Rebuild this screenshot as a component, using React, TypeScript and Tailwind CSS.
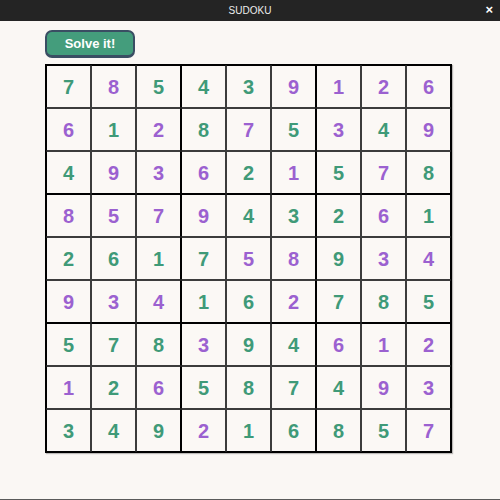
import React from 'react'

type Cell = { v: number; g: boolean }

// g = green (given), p = purple (solved)
const rows: string[] = [
  '7g 8p 5g 4g 3g 9p 1p 2p 6p',
  '6p 1g 2p 8g 7p 5g 3p 4g 9p',
  '4g 9p 3p 6p 2g 1p 5g 7p 8g',
  '8p 5p 7p 9p 4g 3g 2g 6p 1g',
  '2g 6g 1g 7g 5p 8p 9g 3p 4p',
  '9p 3p 4p 1g 6g 2p 7g 8g 5g',
  '5g 7g 8g 3p 9g 4g 6p 1p 2p',
  '1p 2g 6p 5g 8g 7g 4g 9p 3p',
  '3g 4g 9g 2p 1g 6g 8g 5g 7p',
]

const board: Cell[][] = rows.map(r =>
  r.split(' ').map(s => ({ v: Number(s[0]), g: s[1] === 'g' })),
)

const SudokuCell = function ({ cell, r, c }: { cell: Cell; r: number; c: number }) {
  return (
    <div
      className={[
        'flex h-[43px] w-[45px] items-center justify-center border border-[#3c3c3c] text-[20px] font-bold',
        c % 3 === 2 ? 'border-r-black' : '',
        c % 3 === 0 ? 'border-l-black' : '',
        r % 3 === 2 ? 'border-b-black' : '',
        r % 3 === 0 ? 'border-t-black' : '',
        cell.g ? 'text-[#3f9a78]' : 'text-[#9b61d0]',
      ].join(' ')}
    >
      {cell.v}
    </div>
  )
}

export default function App() {
  return (
    <div
      className="flex h-[500px] w-[500px] flex-col border-b border-[#5a5a5a] bg-[#faf7f4]"
      style={{ fontFamily: '"Liberation Sans", Arial, sans-serif' }}
    >
      <div className="relative flex h-[21px] items-center justify-center bg-[#242424]">
        <span className="text-[10px] text-[#ececec]">SUDOKU</span>
        <span className="absolute right-[7px] top-[3px] text-[13px] font-bold leading-none text-white">
          ×
        </span>
      </div>
      <div className="flex flex-col items-start pl-[45px] pt-[9px]">
        <button className="flex h-[28px] w-[90px] items-center justify-center rounded-[7px] border-2 border-b-[3px] border-[#3a4e63] bg-[#449d7c] text-[13px] font-bold text-white">
          Solve it!
        </button>
        <div className="mt-[6px] grid grid-cols-[repeat(9,45px)] border border-black bg-[#fbf8f5] shadow-[1px_1px_1px_rgba(0,0,0,0.25)]">
          {board.map((row, r) =>
            row.map((cell, c) => <SudokuCell key={`${r}-${c}`} cell={cell} r={r} c={c} />),
          )}
        </div>
      </div>
    </div>
  )
}
